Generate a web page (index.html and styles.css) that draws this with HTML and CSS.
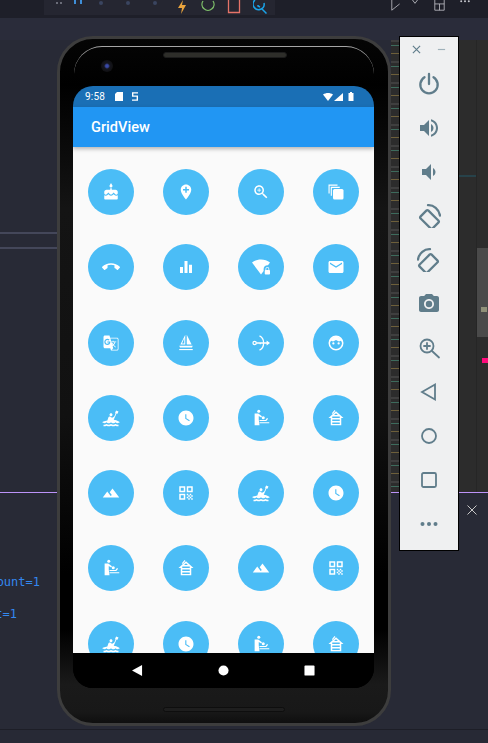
FILE: index.html
```html
<!DOCTYPE html>
<html lang="en">
<head>
<meta charset="utf-8">
<title>GridView emulator</title>
<link rel="stylesheet" href="styles.css">
</head>
<body>
<svg class="defs" width="0" height="0" aria-hidden="true">
  <symbol id="cake" viewBox="0 0 24 24"><path d="M12 6c1.11 0 2-.9 2-2 0-.38-.1-.73-.29-1.03L12 0l-1.71 2.97c-.19.3-.29.65-.29 1.03 0 1.1.9 2 2 2zm4.6 9.99l-1.07-1.07-1.08 1.07c-1.3 1.3-3.58 1.31-4.89 0l-1.07-1.07-1.09 1.07C6.75 16.64 5.88 17 4.96 17c-.73 0-1.4-.23-1.96-.61V21c0 .55.45 1 1 1h16c.55 0 1-.45 1-1v-4.61c-.56.38-1.23.61-1.96.61-.92 0-1.79-.36-2.44-1.01zM18 9h-5V7h-2v2H6c-1.66 0-3 1.34-3 3v1.54c0 1.08.88 1.96 1.96 1.96.52 0 1.02-.2 1.38-.57l2.14-2.13 2.13 2.13c.74.74 2.03.74 2.77 0l2.14-2.13 2.13 2.13c.37.37.86.57 1.38.57 1.08 0 1.96-.88 1.96-1.96V12C21 10.34 19.66 9 18 9z"/></symbol>
  <symbol id="addloc" viewBox="0 0 24 24"><path d="M12 2C8.14 2 5 5.14 5 9c0 5.25 7 13 7 13s7-7.75 7-13c0-3.86-3.14-7-7-7zm4 8h-3v3h-2v-3H8V8h3V5h2v3h3v2z"/></symbol>
  <symbol id="zoomin" viewBox="0 0 24 24"><path d="M15.5 14h-.79l-.28-.27C15.41 12.59 16 11.11 16 9.5 16 5.91 13.09 3 9.5 3S3 5.91 3 9.5 5.91 16 9.5 16c1.61 0 3.09-.59 4.23-1.57l.27.28v.79l5 4.99L20.49 19l-4.99-5zm-6 0C7.01 14 5 11.99 5 9.5S7.01 5 9.5 5 14 7.01 14 9.5 11.99 14 9.5 14z"/><path d="M12 10h-2v2H9v-2H7V9h2V7h1v2h2v1z"/></symbol>
  <symbol id="stack" viewBox="0 0 24 24"><path d="M2 2h12v1.500H3.500V14H2z"/><path d="M5 5h12v1.500H6.500V17H5z"/><rect x="8" y="8" width="14" height="14" rx="2"/></symbol>
  <symbol id="callend" viewBox="0 0 24 24"><path d="M12 9c-1.6 0-3.15.25-4.6.72v3.1c0 .39-.23.74-.56.9-.98.49-1.87 1.12-2.66 1.85-.18.18-.43.28-.7.28-.28 0-.53-.11-.71-.29L.29 13.08c-.18-.17-.29-.42-.29-.7 0-.28.11-.53.29-.71C3.34 8.78 7.46 7 12 7s8.66 1.78 11.71 4.670c.18.18.29.43.29.71 0 .28-.11.53-.29.71l-2.48 2.480c-.18.18-.43.29-.71.29-.27 0-.52-.11-.7-.28-.79-.74-1.690-1.360-2.670-1.850-.33-.16-.56-.5-.56-.9v-3.1C15.150 9.250 13.600 9 12 9z"/></symbol>
  <symbol id="equal" viewBox="0 0 24 24"><path d="M10 20h4V4h-4v16zm-6 0h4v-8H4v8zM16 9v11h4V9h-4z"/></symbol>
  <symbol id="wifilock" viewBox="0 0 24 24"><path d="M20.500 9.500c.28 0 .55.04.81.08L24 6c-3.340-2.510-7.500-4-12-4S3.340 3.490 0 6l12 16 3.500-4.670V14.500c0-2.760 2.240-5 5-5zM23 16v-1.500c0-1.380-1.120-2.500-2.500-2.500S18 13.120 18 14.500V16c-.55 0-1 .45-1 1v4c0 .55.45 1 1 1h5c.55 0 1-.45 1-1v-4c0-.55-.45-1-1-1zm-1 0h-3v-1.500c0-.83.67-1.500 1.500-1.500s1.500.67 1.500 1.500V16z"/></symbol>
  <symbol id="email" viewBox="0 0 24 24"><path d="M20 4H4c-1.100 0-1.990.9-1.990 2L2 18c0 1.100.9 2 2 2h16c1.100 0 2-.9 2-2V6c0-1.100-.9-2-2-2zm0 4l-8 5-8-5V6l8 5 8-5v2z"/></symbol>
  <symbol id="translate" viewBox="0 0 24 24"><path d="M20 5h-9.120L10 2H4c-1.100 0-2 .9-2 2v13c0 1.100.9 2 2 2h7l1 3h8c1.100 0 2-.9 2-2V7c0-1.100-.9-2-2-2zM7.170 14.590c-2.250 0-4.090-1.830-4.090-4.090s1.830-4.090 4.090-4.090c1.040 0 1.990.37 2.740 1.070l.07.06-1.230 1.180-.06-.05c-.29-.27-.78-.59-1.520-.59-1.310 0-2.380 1.090-2.380 2.420s1.070 2.420 2.380 2.420c1.370 0 1.960-.87 2.120-1.460H7.080V9.910h3.950l.01.07c.04.21.05.4.05.61 0 2.350-1.610 4-3.920 4zm6.030-1.710c.33.6.74 1.180 1.190 1.700l-.54.53-.65-2.230zm.77-.76h-.99l-.31-1.040h3.990s-.34 1.310-1.560 2.740c-.52-.62-.89-1.230-1.130-1.700zM21 20c0 .55-.45 1-1 1h-7l2-2-.81-2.770.92-.92L17.790 18l.73-.73-2.710-2.680c.9-1.030 1.600-2.250 1.920-3.510H19v-1.040h-3.640V9h-1.040v1.040h-1.960L11.180 6H20c.55 0 1 .45 1 1v13z"/></symbol>
  <symbol id="boat" viewBox="0 0 24 24"><path fill-rule="evenodd" d="M11 1v13H4.500zM9.700 5.800 6.800 12.700h2.900z"/><path fill-rule="evenodd" d="M13 1l6.500 13H13z"/><path d="M3 15.500h18l-1 2.500H4z"/><path d="M3 20h18v1.500H3z"/></symbol>
  <symbol id="keyarrow" viewBox="0 0 24 24"><g fill="none" stroke="#fff" stroke-width="1.700"><circle cx="3.500" cy="12" r="2.200"/><path d="M5.700 12h8M11 11.500v2.200M10 2.500c3.500 1.500 5.500 5 5.500 9.500s-2 8-5.500 9.500M13.500 12H22"/></g><path d="M19.500 8.800 24 12l-4.500 3.200z"/></symbol>
  <symbol id="face" viewBox="0 0 24 24"><path fill-rule="evenodd" d="M12 2a10 10 0 1 0 0 20 10 10 0 0 0 0-20zm0 2c.9 0 1.800.15 2.600.45L19 9.500c.6 1 1 2.300 1 2.500a8 8 0 0 1-16 0c0-.2.4-1.500 1-2.500l4.400-5.050A8 8 0 0 1 12 4z"/><path d="M5 8.500 9 4h6l4 4.500-3 1.500-4-2-4 2z"/><circle cx="8.500" cy="12.500" r="1.500"/><circle cx="15.500" cy="12.500" r="1.500"/></symbol>
  <symbol id="kayak" viewBox="0 0 24 24"><path d="M21 23c-1.030 0-2.060-.25-3-.75-1.890 1-4.110 1-6 0-1.890 1-4.110 1-6 0-.95.5-1.970.75-3 .75H2v-2h1c1.040 0 2.080-.35 3-1 1.830 1.300 4.170 1.300 6 0 1.830 1.300 4.170 1.300 6 0 .91.65 1.960 1 3 1h1v2h-1zM12 5.500c-1.100 0-2 .9-2 2s.9 2 2 2 2-.9 2-2-.9-2-2-2zM24 17.500s-1.520.71-3.930 1.370c-.82-.23-1.530-.75-2.070-1.370-.73.84-1.800 1.500-3 1.500s-2.270-.66-3-1.500c-.73.84-1.800 1.500-3 1.500s-2.270-.66-3-1.500c-.54.61-1.250 1.130-2.070 1.370C1.520 18.210 0 17.500 0 17.500s2.930-1.360 7.130-2.080l1.350-4.170c.31-.95 1.320-1.470 2.270-1.160.09.03.19.07.27.11l2.470 1.300 2.840-1.500 1.650-3.710-.51-1.320L18.800 2 22 3.430 20.670 6.400l-1.310-.5-3.720 8.340C20.490 14.910 24 17.500 24 17.500z"/></symbol>
  <symbol id="clock" viewBox="0 0 24 24"><path d="M12 2C6.500 2 2 6.500 2 12s4.500 10 10 10 10-4.500 10-10S17.500 2 12 2zm4.200 14.200L11 13V7h1.500v5.200l4.500 2.700-.8 1.300z"/></symbol>
  <symbol id="baby" viewBox="0 0 24 24"><circle cx="9" cy="3" r="2"/><path d="M3.500 6h4.800l5 3.500-1 1.700-3.300-2V14l1 7.500H3.500z"/><circle cx="15" cy="11.500" r="2"/><path d="M10 14.500h8l2-2.500 1.500 1-2.500 3h-9zM10 17.500h13V19H10z"/></symbol>
  <symbol id="house" viewBox="0 0 24 24"><path d="M19 12h3L12 3 2 12h3v8h2v-2h10v2h2v-8zM7.210 10h9.580l.21.190V12H7v-1.810l.21-.19zm7.360-2H9.430L12 5.690 14.570 8zM7 16v-2h10v2H7z"/><path d="M19 20H5v1.800h14zM6.500 5.500 10 1.200l1.200 1-3.500 4.300z"/></symbol>
  <symbol id="landscape" viewBox="0 0 24 24"><path d="M14 6l-3.750 5 2.850 3.800-1.600 1.200C9.810 13.750 7 10 7 10l-6 8h22L14 6z"/></symbol>
  <symbol id="qr" viewBox="0 0 24 24"><path d="M3 11h8V3H3v8zm2-6h4v4H5V5zM3 21h8v-8H3v8zm2-6h4v4H5v-4zM13 3v8h8V3h-8zm6 6h-4V5h4v4zM19 19h2v2h-2zM13 13h2v2h-2zM15 15h2v2h-2zM13 17h2v2h-2zM15 19h2v2h-2zM17 17h2v2h-2zM17 13h2v2h-2zM19 15h2v2h-2z"/></symbol>
</svg>

<div class="ide">
  <header class="topbar">
    <div class="debugbar">
      <span class="grip"></span>
      <span class="pause"></span>
      <span class="dot"></span>
      <span class="dot"></span>
      <span class="dot"></span>
      <svg class="dbg" viewBox="0 0 14 14"><path class="bolt" d="M8 0 3 8h4l-1 6 5-9H7z"/></svg>
      <svg class="dbg" viewBox="0 0 14 14"><path class="reload" d="M2 1a6 6 0 1 0 10 0"/></svg>
      <svg class="dbg" viewBox="0 0 14 14"><path class="stop" d="M1.500 0v12.500h11V0"/></svg>
      <svg class="dbg" viewBox="0 0 14 14"><path class="lens" d="M2 0a5.500 5.500 0 1 0 9 3M9 9l4.500 4.500M5 5v1l2 1"/></svg>
    </div>
    <div class="actions">
      <svg class="act" viewBox="0 0 14 14"><path d="M1 0v13L11 5"/></svg>
      <svg class="chev" viewBox="0 0 8 6"><path d="M1 0l3 4 3-4"/></svg>
      <svg class="act" viewBox="0 0 14 14"><path d="M1 0v13h12V0M7 5v8M1 5h12"/></svg>
      <svg class="more" viewBox="0 0 10 3"><circle cx="1.200" cy="1.200" r="1"/><circle cx="5" cy="1.200" r="1"/><circle cx="8.800" cy="1.200" r="1"/></svg>
    </div>
  </header>
  <div class="tabband"></div>
  <div class="editor">
    <div class="ed-left">
      <div class="rules"></div>
    </div>
    <div class="ed-right">
      <div class="minimap"></div>
      <div class="teal"></div>
      <div class="scroll">
        <div class="thumb"><span class="tile"></span></div>
        <span class="pink"></span>
      </div>
    </div>
  </div>
  <div class="panel">
    <div class="term">
      <div class="term-line">ount=1</div>
      <div class="term-line short">t=1</div>
    </div>
    <svg class="panel-close" viewBox="0 0 10 10"><path d="M.5.5l9 9M9.500.5l-9 9"/></svg>
  </div>
  <div class="statusbar"></div>
</div>

<div class="phone">
  <span class="speaker"></span>
  <span class="camera"></span>
  <span class="speaker-bottom"></span>
  <div class="screen">
    <div class="status">
      <span class="time">9:58</span>
      <svg class="st st-sd" viewBox="0 0 8 9"><path d="M2 0h6v9H0V2z"/></svg>
      <svg class="st st-five" viewBox="0 0 7 10"><path fill-rule="evenodd" d="M0 0h7v1.600H1.600v2.200H7V10H0V8.400h5.400V5.400H0z"/></svg>
      <span class="spacer"></span>
      <svg class="st st-wifi" viewBox="0 0 10 8"><path d="M0 1.500C3-.5 7-.5 10 1.500L5 8z"/></svg>
      <svg class="st st-signal" viewBox="0 0 9 8"><path d="M9 0v8H0z"/></svg>
      <svg class="st st-batt" viewBox="0 0 6 9"><path d="M2 0h2v1h1.500v8H.5V1H2z"/></svg>
    </div>
    <div class="appbar">GridView</div>
    <div class="content">
      <div class="grid">
        <div class="cell"><span class="circle"><svg><use href="#cake"/></svg></span></div>
        <div class="cell"><span class="circle"><svg><use href="#addloc"/></svg></span></div>
        <div class="cell"><span class="circle"><svg><use href="#zoomin"/></svg></span></div>
        <div class="cell"><span class="circle"><svg><use href="#stack"/></svg></span></div>
        <div class="cell"><span class="circle"><svg><use href="#callend"/></svg></span></div>
        <div class="cell"><span class="circle"><svg><use href="#equal"/></svg></span></div>
        <div class="cell"><span class="circle"><svg><use href="#wifilock"/></svg></span></div>
        <div class="cell"><span class="circle"><svg><use href="#email"/></svg></span></div>
        <div class="cell"><span class="circle"><svg><use href="#translate"/></svg></span></div>
        <div class="cell"><span class="circle"><svg><use href="#boat"/></svg></span></div>
        <div class="cell"><span class="circle"><svg><use href="#keyarrow"/></svg></span></div>
        <div class="cell"><span class="circle"><svg><use href="#face"/></svg></span></div>
        <div class="cell"><span class="circle"><svg><use href="#kayak"/></svg></span></div>
        <div class="cell"><span class="circle"><svg><use href="#clock"/></svg></span></div>
        <div class="cell"><span class="circle"><svg><use href="#baby"/></svg></span></div>
        <div class="cell"><span class="circle"><svg><use href="#house"/></svg></span></div>
        <div class="cell"><span class="circle"><svg><use href="#landscape"/></svg></span></div>
        <div class="cell"><span class="circle"><svg><use href="#qr"/></svg></span></div>
        <div class="cell"><span class="circle"><svg><use href="#kayak"/></svg></span></div>
        <div class="cell"><span class="circle"><svg><use href="#clock"/></svg></span></div>
        <div class="cell"><span class="circle"><svg><use href="#baby"/></svg></span></div>
        <div class="cell"><span class="circle"><svg><use href="#house"/></svg></span></div>
        <div class="cell"><span class="circle"><svg><use href="#landscape"/></svg></span></div>
        <div class="cell"><span class="circle"><svg><use href="#qr"/></svg></span></div>
        <div class="cell"><span class="circle"><svg><use href="#kayak"/></svg></span></div>
        <div class="cell"><span class="circle"><svg><use href="#clock"/></svg></span></div>
        <div class="cell"><span class="circle"><svg><use href="#baby"/></svg></span></div>
        <div class="cell"><span class="circle"><svg><use href="#house"/></svg></span></div>
      </div>
    </div>
    <div class="navbar">
      <svg class="nav-ic" viewBox="0 0 12 12"><path d="M11 0v12L0 6z"/></svg>
      <svg class="nav-ic" viewBox="0 0 12 12"><circle cx="6" cy="6" r="5.500"/></svg>
      <svg class="nav-ic" viewBox="0 0 12 12"><rect x=".5" y=".5" width="11" height="11" rx="1"/></svg>
    </div>
  </div>
</div>

<aside class="toolbar">
  <div class="tb-head">
    <svg class="tb-small" viewBox="0 0 10 10"><path d="M1 1l8 8M9 1l-8 8"/></svg>
    <svg class="tb-small" viewBox="0 0 10 10"><path d="M1 5h8"/></svg>
  </div>
  <div class="tb-icons">
    <svg class="tb-ic" viewBox="0 0 24 24"><path class="line" d="M12 2v10M7.500 5.200a8.700 8.700 0 1 0 9 0"/></svg>
    <svg class="tb-ic" viewBox="0 0 24 24"><path d="M3 9v6h4l5 5V4L7 9H3zm13.500 3c0-1.770-1.020-3.290-2.500-4.030v8.050c1.480-.73 2.500-2.250 2.500-4.020zM14 3.230v2.060c2.890.86 5 3.540 5 6.710s-2.110 5.850-5 6.710v2.060c4.010-.91 7-4.490 7-8.770s-2.990-7.860-7-8.770z"/></svg>
    <svg class="tb-ic" viewBox="0 0 24 24"><path d="M18.500 12c0-1.770-1.020-3.290-2.500-4.030v8.050c1.480-.73 2.500-2.250 2.500-4.020zM5 9v6h4l5 5V4L9 9H5z"/></svg>
    <svg class="tb-ic" viewBox="0 0 24 24"><g class="line"><rect x="7" y="7" width="11" height="17" rx="1.500" transform="rotate(-45 12.500 15.500)" /><path d="M11 1.200C16.500.8 22 5 23 11.500"/></g></svg>
    <svg class="tb-ic" viewBox="0 0 24 24"><g class="line"><rect x="6" y="7" width="11" height="17" rx="1.500" transform="rotate(45 11.500 15.500)"/><path d="M13 1.200C7.500.8 2 5 1 11.500"/></g></svg>
    <svg class="tb-ic" viewBox="0 0 24 24"><path d="M12 15.200a3.200 3.200 0 1 0 0-6.400 3.200 3.200 0 0 0 0 6.400z"/><path d="M9 2 7.170 4H4c-1.100 0-2 .9-2 2v12c0 1.100.9 2 2 2h16c1.100 0 2-.9 2-2V6c0-1.100-.9-2-2-2h-3.170L15 2H9zm3 15c-2.760 0-5-2.240-5-5s2.240-5 5-5 5 2.240 5 5-2.240 5-5 5z"/></svg>
    <svg class="tb-ic" viewBox="0 0 24 24"><g class="line thin"><circle cx="10" cy="10" r="6.500"/><path d="M15 15l7 6.500M10 7v6M7 10h6"/></g></svg>
    <svg class="tb-ic" viewBox="0 0 24 24"><path class="line thin" d="M18 4.500v15L5 12z"/></svg>
    <svg class="tb-ic" viewBox="0 0 24 24"><circle class="line thin" cx="12" cy="12" r="7"/></svg>
    <svg class="tb-ic" viewBox="0 0 24 24"><rect class="line thin" x="5" y="5" width="14" height="14" rx="1.500"/></svg>
    <svg class="tb-ic" viewBox="0 0 24 24"><circle cx="5.500" cy="12" r="2"/><circle cx="12" cy="12" r="2"/><circle cx="18.500" cy="12" r="2"/></svg>
  </div>
</aside>
</body>
</html>
```
FILE: styles.css
```css
* { box-sizing: border-box; }
html, body { margin: 0; padding: 0; }
body {
  position: relative;
  width: 488px;
  height: 743px;
  overflow: hidden;
  background: #282a36;
  font-family: "Roboto", "Liberation Sans", sans-serif;
}
.defs { position: absolute; }

/* IDE behind the device */
.ide { display: flex; flex-direction: column; height: 743px; }
.topbar {
  height: 18px;
  background: #1e1f29;
  display: flex;
  justify-content: space-between;
}
.debugbar {
  margin-left: 44px;
  width: 231px;
  height: 15px;
  background: #252631;
  display: flex;
  align-items: flex-start;
  padding-left: 12px;
  overflow: hidden;
}
.debugbar > * { flex: none; }
.grip { width: 6px; height: 2px; margin-top: 2px; margin-right: 12px; border-left: 2px solid #6a6c78; border-right: 2px solid #6a6c78; }
.pause { width: 8px; height: 4px; margin-right: 17px; border-left: 2px solid #3f8fd8; border-right: 2px solid #3f8fd8; }
.dot { width: 4px; height: 4px; margin-top: 1px; margin-right: 23px; border-radius: 50%; background: #3a4560; }
.dbg { width: 14px; height: 14px; margin-right: 12px; fill: none; }
.dot + .dbg { margin-left: -5px; }
.bolt { fill: #e8a33d; }
.reload { stroke: #7fc06a; stroke-width: 1.3; }
.stop { stroke: #e57368; stroke-width: 1.3; }
.lens { stroke: #1aa3e8; stroke-width: 1.5; }
.actions { display: flex; align-items: flex-start; gap: 8px; padding-right: 18px; }
.act { width: 13px; height: 11px; fill: none; stroke: #c5c6cc; }
.chev { width: 8px; height: 5px; fill: none; stroke: #c5c6cc; margin-right: 6px; }
.more { width: 10px; height: 3px; margin-left: 6px; fill: #c5c6cc; }
.tabband { height: 22px; background: #2a2c3a; }
.editor { height: 452px; display: flex; }
.ed-left { flex: 1; background: #282a36; padding-top: 192px; }
.rules {
  height: 17px;
  border-top: 2px solid #44475a;
  border-bottom: 2px solid #44475a;
}
.ed-right {
  width: 97px;
  background: #2c2c2c;
  position: relative;
  display: flex;
}
.minimap {
  width: 8px;
  background:
    repeating-linear-gradient(180deg, #3f3f3f 0 2px, #2c2c2c 2px 5px, #3d6b5c 5px 6px, #2c2c2c 6px 13px, #6d5f3a 13px 14px, #2c2c2c 14px 21px);
}
.teal { position: absolute; left: 68px; top: 135px; width: 17px; height: 2px; background: #27424a; }
.scroll { margin-left: auto; width: 12px; border-left: 1px solid #262626; padding-top: 208px; position: relative; }
.thumb { height: 89px; background: #4a4a4a; padding-top: 59px; }
.tile { display: block; width: 6px; height: 5px; margin-left: 4px; background: #8f9078; }
.pink { position: absolute; left: 5px; top: 318px; width: 6px; height: 5px; background: #ff0a7c; }
.panel {
  flex: 1;
  background: #282a36;
  border-top: 1px solid #bd93f9;
  position: relative;
  padding-top: 73px;
}
.term { font-family: "DejaVu Sans Mono", "Liberation Mono", monospace; font-size: 12px; line-height: 32px; color: #3388f0; }
.term-line { width: 40px; height: 32px; overflow: hidden; display: flex; justify-content: flex-end; }
.term-line.short { width: 17px; }
.panel-close { position: absolute; left: 467px; top: 12px; width: 10px; height: 10px; fill: none; stroke: #c8c8c8; }
.statusbar { height: 14px; background: #272935; border-top: 1px solid #1d1e27; }

/* Device */
.phone {
  position: absolute;
  left: 57px;
  top: 36px;
  width: 334px;
  height: 690px;
  padding: 47px 14px 35px 13px;
  border: 3px solid #3d3d3d;
  border-radius: 36px;
  background: linear-gradient(180deg, #050505 0, #000 7%, #141414 25%, #111 55%, #000 78%, #000 86%, #1a1a1a 94%, #181818 98%, #0c0c0c 100%);
  background-origin: border-box;
}
.phone::before {
  content: "";
  position: absolute;
  left: 14px;
  right: 14px;
  top: 7px;
  height: 30px;
  border-top: 1px solid #a5a5a5;
  border-radius: 28px 28px 0 0;
}
.speaker {
  position: absolute;
  left: 103px;
  top: 13px;
  width: 124px;
  height: 6px;
  border-radius: 3px;
  background: #2e2e2a;
  border: 1px solid #1c1c1c;
}
.speaker-bottom {
  position: absolute;
  left: 103px;
  bottom: 11px;
  width: 122px;
  height: 5px;
  border-radius: 3px;
  background: #1e1e1e;
  border: 1px solid #0e0e0e;
}
.camera {
  position: absolute;
  left: 41px;
  top: 21px;
  width: 12px;
  height: 12px;
  border-radius: 50%;
  background: radial-gradient(circle, #3a4aa8 0 15%, #15161f 35%, #101012 70%, #0c0c0c 100%);
}
.screen { height: 602px; width: 301px; display: flex; flex-direction: column; border-radius: 20px; overflow: hidden; background: #000; }
.status {
  height: 21px;
  background: #1a6fb5;
  display: flex;
  align-items: center;
  padding: 0 20px 0 12px;
  color: #fff;
  font-size: 10px;
}
.time { width: 27px; letter-spacing: .2px; }
.st { fill: #fff; flex: none; }
.st-sd { width: 8px; height: 9px; margin-left: 3px; }
.st-five { width: 6px; height: 9px; margin-left: 9px; }
.spacer { flex: 1; }
.st-wifi { width: 10px; height: 8px; }
.st-signal { width: 9px; height: 8px; margin-left: 1px; }
.st-batt { width: 6px; height: 9px; margin-left: 5px; }
.appbar {
  height: 40px;
  background: #2196f3;
  color: #fff;
  font-size: 14.6px;
  font-weight: 500;
  line-height: 41px;
  padding-left: 18px;
  box-shadow: 0 2px 4px rgba(0, 0, 0, .28);
  position: relative;
  z-index: 1;
}
.content { height: 506px; background: #fafafa; overflow: hidden; padding-top: 7.6px; }
.grid { display: grid; grid-template-columns: repeat(4, 75.25px); grid-auto-rows: 75.25px; }
.cell { display: flex; align-items: center; justify-content: center; }
.circle {
  width: 46px;
  height: 46px;
  border-radius: 50%;
  background: #4bbdf6;
  display: flex;
  align-items: center;
  justify-content: center;
}
.circle svg { width: 18px; height: 18px; fill: #fff; }
.navbar {
  height: 35px;
  background: #000;
  display: flex;
  align-items: center;
  justify-content: center;
  gap: 75px;
}
.nav-ic { width: 11px; height: 11px; fill: #fff; }

/* Emulator side toolbar */
.toolbar {
  position: absolute;
  left: 399px;
  top: 36px;
  width: 60px;
  height: 515px;
  background: #eff0f1;
  border: 1px solid #000;
  padding-top: 8px;
}
.tb-head { display: flex; justify-content: space-between; padding: 0 12px 0 12px; height: 10px; }
.tb-small { width: 9px; height: 9px; fill: none; stroke: #607d8b; stroke-width: 1.300; }
.tb-small + .tb-small { stroke: #9fb1ba; }
.tb-icons { display: flex; flex-direction: column; align-items: center; gap: 20px; margin-top: 17px; }
.tb-ic { width: 24px; height: 24px; fill: #607d8b; flex: none; }
.line { fill: none; stroke: #607d8b; stroke-width: 2.300; stroke-linecap: round; }
.line.thin { stroke-width: 1.800; }
```
